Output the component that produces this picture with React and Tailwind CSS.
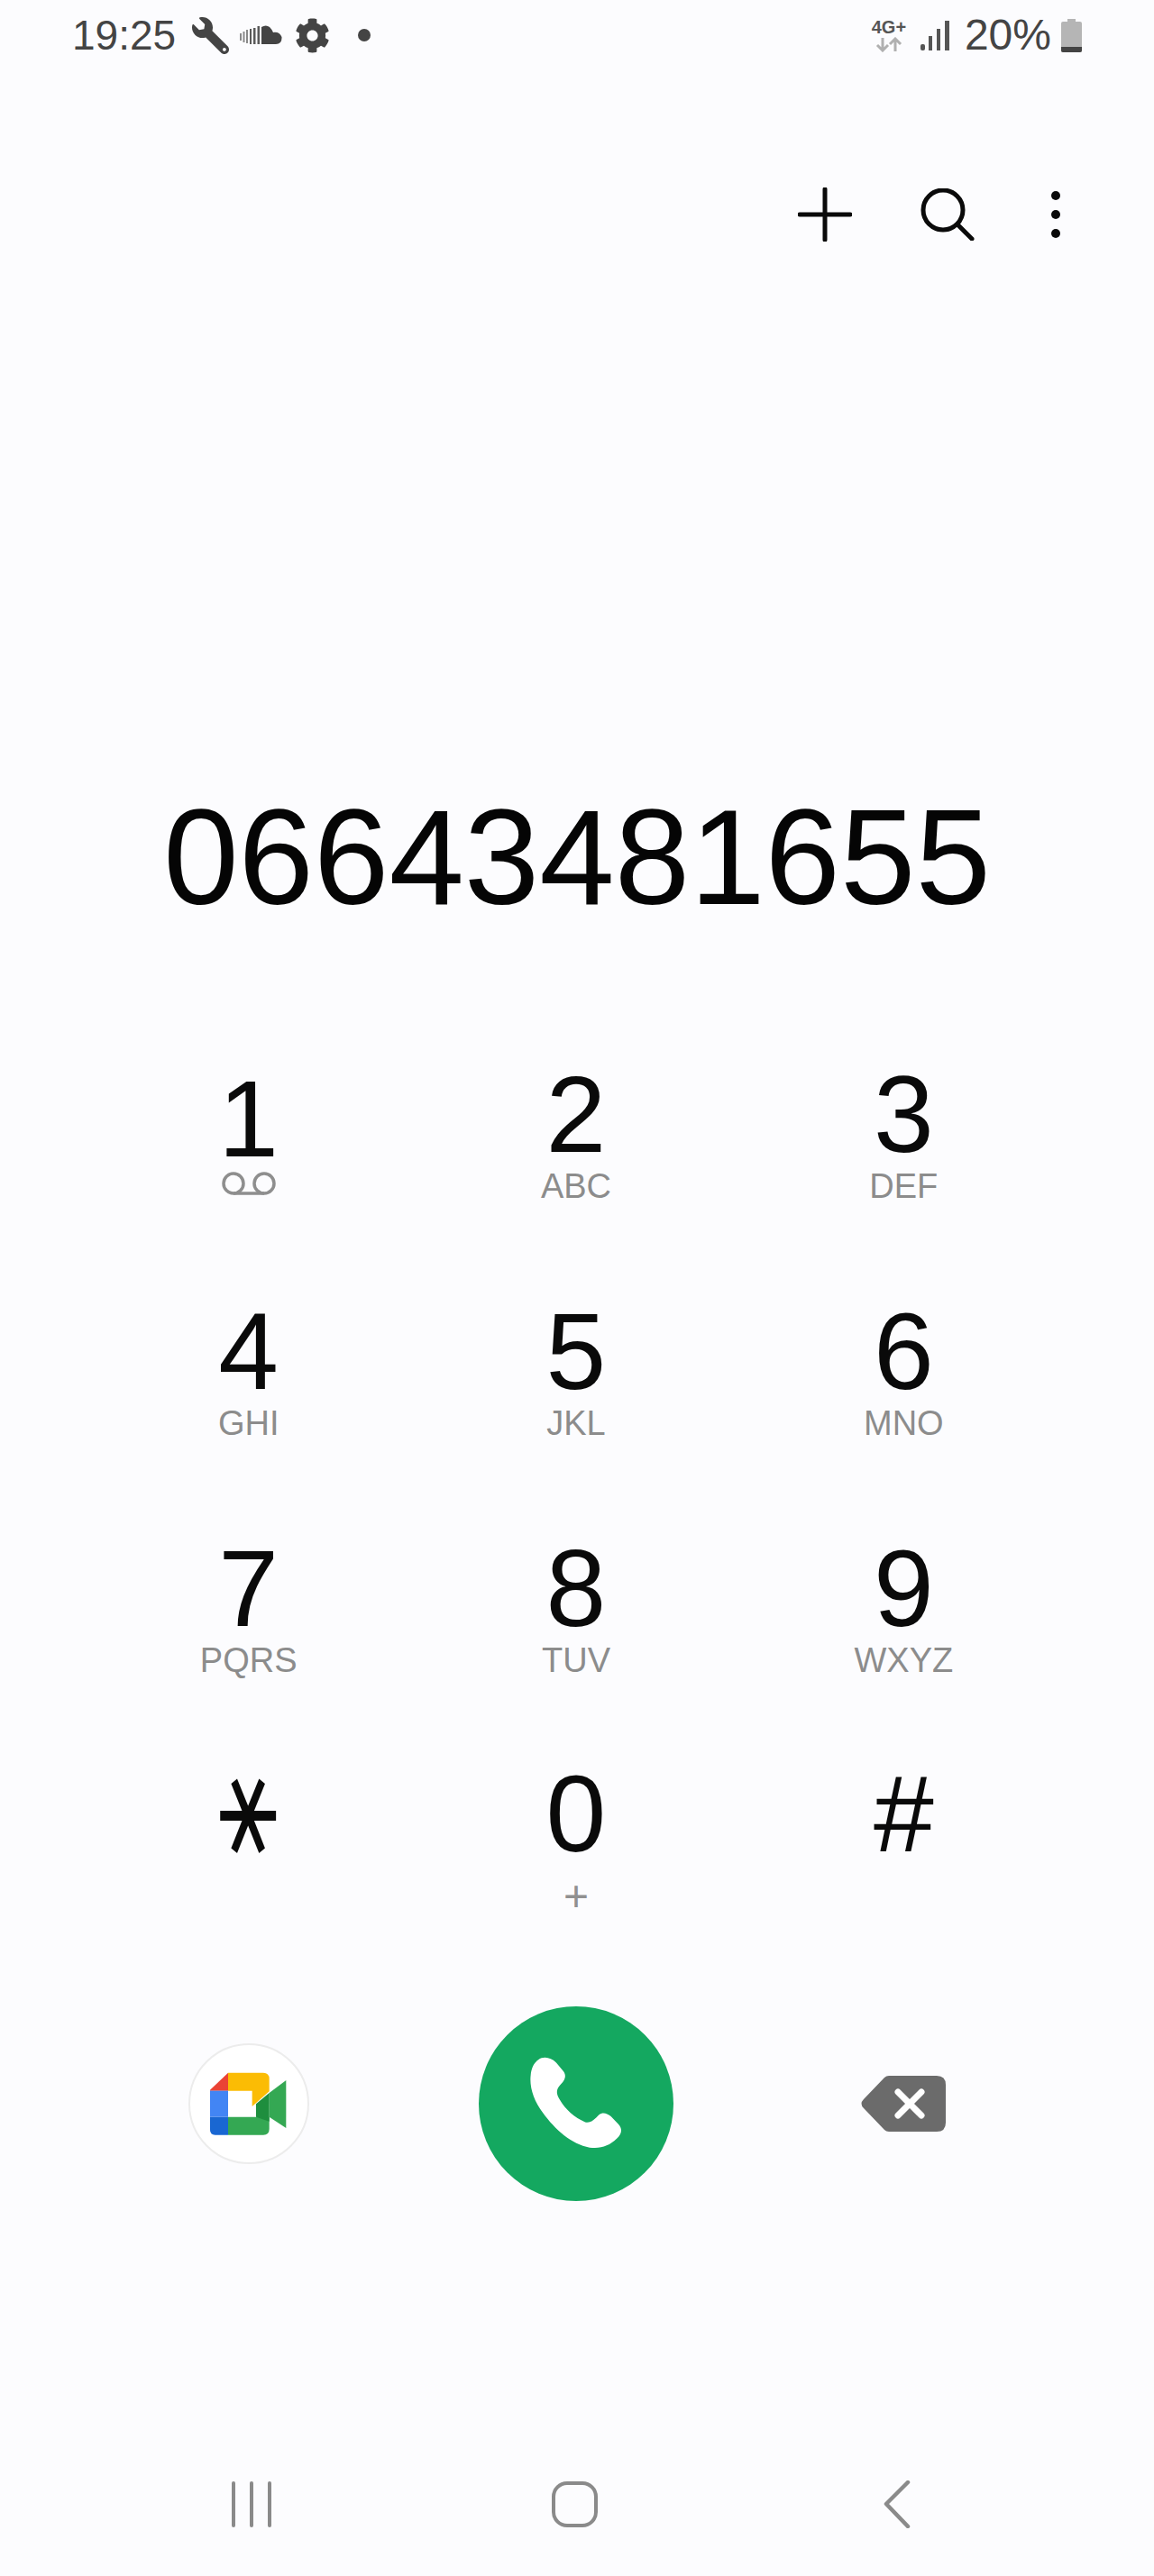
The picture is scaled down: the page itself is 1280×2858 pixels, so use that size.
import React from "react";
import { FaWrench, FaCog } from "react-icons/fa";

const keys = [
  ["1", null], ["2", "ABC"], ["3", "DEF"],
  ["4", "GHI"], ["5", "JKL"], ["6", "MNO"],
  ["7", "PQRS"], ["8", "TUV"], ["9", "WXYZ"],
];

function Voicemail() {
  return (
    <svg width="60" height="28" viewBox="0 0 60 28" className="mt-[9px]" fill="none" stroke="#8e8e8e" strokeWidth="3.5">
      <circle cx="13" cy="13" r="11" />
      <circle cx="47" cy="13" r="11" />
      <line x1="13" y1="24" x2="47" y2="24" />
    </svg>
  );
}

function Key({ digit, label }) {
  return (
    <div className="flex flex-col items-center">
      {label ? (
        <>
          <div className="text-[120px] leading-[100px] text-[#0a0a0a]">{digit}</div>
          <div className="mt-[10px] text-[38px] leading-[40px] text-[#8c8c8c]">{label}</div>
        </>
      ) : (
        <>
          <div className="pt-[5px] text-[120px] leading-[100px] text-[#0a0a0a]">{digit}</div>
          <Voicemail />
        </>
      )}
    </div>
  );
}

function Soundcloud() {
  return (
    <svg width="47" height="22" viewBox="0 0 47 22" className="ml-[12px]">
      <g fill="#8a8a8a">
        <rect x="0" y="9" width="2" height="8" />
        <rect x="3.5" y="7" width="2" height="12" />
        <rect x="7" y="5" width="2" height="15" />
      </g>
      <g fill="#5a5a5a">
        <rect x="11" y="4" width="2" height="17" />
        <rect x="15" y="3" width="2.5" height="18" />
        <rect x="19.5" y="1" width="2.5" height="20" />
      </g>
      <path d="M24 2 Q29 -1 33 2 Q36 5 37 8 Q44 7 46.5 13 Q47 21 40 21 H24 Z" fill="#444444" />
    </svg>
  );
}

function MeetLogo() {
  return (
    <svg width="85" height="71" viewBox="165 176 255 213">
      <path d="M165 235 L225 178 L225 238 L165 238 Z" fill="#ea4335" />
      <path d="M225 178 H342 Q362 178 362 198 V240 L305 290 V238 H225 Z" fill="#fbbc04" />
      <rect x="165" y="238" width="60" height="87" fill="#4285f4" />
      <path d="M165 325 H225 V385 H182 Q165 385 165 368 Z" fill="#1967d2" />
      <path d="M225 325 H305 L362 325 V365 Q362 385 342 385 H225 Z" fill="#34a853" />
      <path d="M362 245 L418 203 V362 L362 325 Z" fill="#34a853" />
      <path d="M318 282 L362 245 V340 L318 325 Z" fill="#1e8e3e" />
    </svg>
  );
}

export default function App() {
  return (
    <div className="h-[2858px] w-[1280px] overflow-hidden bg-[#fcfcfe] font-['Liberation_Sans',Arial,sans-serif]">
      {/* status bar */}
      <div className="flex h-[78px] items-center justify-between pl-[80px] pr-[80px] text-[#444444]">
        <div className="flex items-center">
          <span className="text-[46px] leading-none">19:25</span>
          <FaWrench className="ml-[18px] -scale-x-100" size={41} color="#444444" />
          <Soundcloud />
          <FaCog className="ml-[14px]" size={39} color="#444444" />
          <span className="ml-[31px] h-[14px] w-[14px] rounded-full bg-[#444444]" />
        </div>
        <div className="flex items-center">
          <div className="flex w-[40px] flex-col items-center">
            <span className="text-[20px] font-bold leading-[18px] text-[#555555]">4G+</span>
            <svg width="30" height="17" viewBox="0 0 30 17" className="mt-[2px]" fill="none" stroke="#b0b0b0" strokeWidth="3">
              <path d="M8 1 V15 M2 9 L8 15 L14 9" />
              <path d="M22 16 V2 M16 8 L22 2 L28 8" />
            </svg>
          </div>
          <svg width="32" height="33" viewBox="0 0 32 33" className="ml-[15px]" fill="#555555">
            <rect x="0" y="26" width="5" height="7" rx="2" />
            <rect x="9" y="17" width="4" height="16" />
            <rect x="18" y="9" width="4" height="24" />
            <rect x="27" y="0" width="5" height="33" />
          </svg>
          <span className="ml-[17px] text-[48px] leading-none">20%</span>
          <svg width="23" height="37" viewBox="0 0 23 37" className="ml-[11px]">
            <path d="M7 0 H16 V3 H21 Q23 3 23 5 V35 Q23 37 21 37 H2 Q0 37 0 35 V5 Q0 3 2 3 H7 Z" fill="#b5b5b5" />
            <path d="M0 31 H23 V35 Q23 37 21 37 H2 Q0 37 0 35 Z" fill="#444444" />
          </svg>
        </div>
      </div>

      {/* actions */}
      <div className="mt-[130px] flex h-[60px] items-center justify-end pr-[104px]">
        <svg width="60" height="60" viewBox="0 0 60 60" stroke="#0a0a0a" strokeWidth="5" strokeLinecap="round">
          <line x1="30" y1="2" x2="30" y2="58" />
          <line x1="2" y1="30" x2="58" y2="30" />
        </svg>
        <svg width="60" height="58" viewBox="0 0 60 58" className="ml-[76px]" fill="none" stroke="#0a0a0a" strokeWidth="5" strokeLinecap="round">
          <circle cx="25" cy="24" r="22" />
          <line x1="41" y1="40" x2="57" y2="56" />
        </svg>
        <svg width="10" height="54" viewBox="0 0 10 54" className="ml-[85px]" fill="#0a0a0a">
          <circle cx="5" cy="6" r="5" />
          <circle cx="5" cy="27" r="5" />
          <circle cx="5" cy="48" r="5" />
        </svg>
      </div>

      {/* number */}
      <div className="mt-[608px] text-center text-[150px] leading-[150px] text-[#050505]">06643481655</div>

      {/* keypad */}
      <div className="ml-[94px] mr-[96px] mt-[160px] grid grid-cols-3 grid-rows-[263px_263px_250px_264px]">
        {keys.map(([d, l]) => (
          <Key key={d} digit={d} label={l} />
        ))}
        <div className="flex flex-col items-center">
          <div className="mt-[2px] origin-center scale-x-[0.84] scale-y-[1.2] font-['DejaVu_Sans',sans-serif] text-[132px] leading-[70px] text-[#0a0a0a]">⚹</div>
        </div>
        <div className="flex flex-col items-center">
          <div className="text-[120px] leading-[100px] text-[#0a0a0a]">0</div>
          <div className="mt-[22px] text-[48px] leading-[40px] text-[#909090]">+</div>
        </div>
        <div className="flex flex-col items-center">
          <div className="text-[120px] leading-[100px] text-[#0a0a0a]">#</div>
        </div>
      </div>

      {/* call row */}
      <div className="ml-[94px] mr-[96px] grid h-[216px] grid-cols-3 items-center">
        <div className="flex justify-center">
          <div className="flex h-[134px] w-[134px] items-center justify-center rounded-full border-2 border-[#ececec] bg-white">
            <MeetLogo />
          </div>
        </div>
        <div className="flex justify-center">
          <div className="flex h-[216px] w-[216px] items-center justify-center rounded-full bg-[#14a860]">
            <svg width="104" height="104" viewBox="235 220 310 310" fill="#ffffff">
              <path d="M265 230 C285 215 310 225 325 240 L348 268 C358 282 355 295 340 310 C325 325 322 340 335 360 C355 395 385 420 420 436 C440 440 452 425 465 412 C478 402 490 405 505 417 L530 443 C545 460 540 475 525 490 C500 515 470 525 435 520 C375 510 320 460 280 405 C250 365 235 320 240 280 C242 258 250 240 265 230 Z" />
            </svg>
          </div>
        </div>
        <div className="flex justify-center">
          <svg width="94" height="62" viewBox="0 0 94 62">
            <path d="M26 2 Q28 0 31 0 H84 Q94 0 94 10 V52 Q94 62 84 62 H31 Q28 62 26 60 L3 36 Q-2 31 3 26 Z" fill="#6b6b6b" />
            <path d="M41 18 L67 44 M67 18 L41 44" stroke="#ffffff" strokeWidth="7" strokeLinecap="round" />
          </svg>
        </div>
      </div>

      {/* nav bar */}
      <div className="mt-[311px] flex h-[51px] items-center pl-[256px]">
        <svg width="46" height="51" viewBox="0 0 46 51" stroke="#8a8a8a" strokeWidth="4" strokeLinecap="round">
          <line x1="3" y1="2" x2="3" y2="49" />
          <line x1="23" y1="2" x2="23" y2="49" />
          <line x1="43" y1="2" x2="43" y2="49" />
        </svg>
        <div className="ml-[310px] h-[51px] w-[51px] rounded-[17px] border-[4px] border-[#8a8a8a]" />
        <svg width="30" height="53" viewBox="0 0 30 53" className="ml-[317px]" fill="none" stroke="#8a8a8a" strokeWidth="4.5" strokeLinecap="round" strokeLinejoin="round">
          <path d="M27 2 L3 26 L27 51" />
        </svg>
      </div>
    </div>
  );
}
